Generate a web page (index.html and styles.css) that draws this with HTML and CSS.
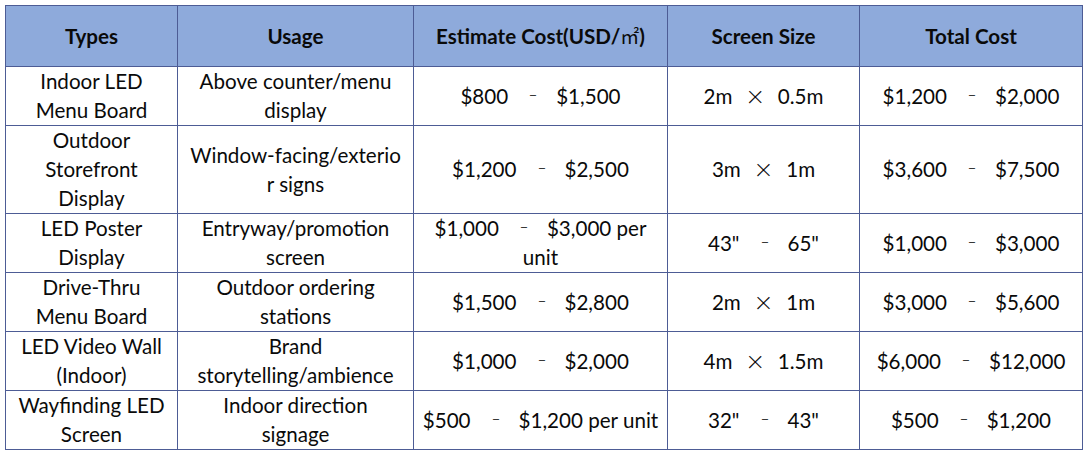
FILE: index.html
```html
<!DOCTYPE html>
<html lang="en">
<head>
<meta charset="utf-8">
<title>LED Screen Costs</title>
<link rel="stylesheet" href="styles.css">
</head>
<body>
<table class="cost-table">
  <colgroup>
    <col class="c1"><col class="c2"><col class="c3"><col class="c4"><col class="c5">
  </colgroup>
  <thead>
    <tr class="head">
      <th>Types</th>
      <th>Usage</th>
      <th>Estimate Cost(USD/<span class="cjk">㎡</span>)</th>
      <th>Screen Size</th>
      <th>Total Cost</th>
    </tr>
  </thead>
  <tbody>
    <tr>
      <td>Indoor LED<br>Menu Board</td>
      <td>Above counter/menu<br>display</td>
      <td>$800<span class="sep">–</span>$1,500</td>
      <td>2m<span class="times">×</span>0.5m</td>
      <td>$1,200<span class="sep">–</span>$2,000</td>
    </tr>
    <tr>
      <td>Outdoor<br>Storefront<br>Display</td>
      <td>Window-facing/exterio<br>r signs</td>
      <td>$1,200<span class="sep">–</span>$2,500</td>
      <td>3m<span class="times">×</span>1m</td>
      <td>$3,600<span class="sep">–</span>$7,500</td>
    </tr>
    <tr>
      <td>LED Poster<br>Display</td>
      <td>Entryway/promotion<br>screen</td>
      <td>$1,000<span class="sep">–</span>$3,000 per<br>unit</td>
      <td>43"<span class="sep">–</span>65"</td>
      <td>$1,000<span class="sep">–</span>$3,000</td>
    </tr>
    <tr>
      <td>Drive-Thru<br>Menu Board</td>
      <td>Outdoor ordering<br>stations</td>
      <td>$1,500<span class="sep">–</span>$2,800</td>
      <td>2m<span class="times">×</span>1m</td>
      <td>$3,000<span class="sep">–</span>$5,600</td>
    </tr>
    <tr>
      <td>LED Video Wall<br>(Indoor)</td>
      <td>Brand<br>storytelling/ambience</td>
      <td>$1,000<span class="sep">–</span>$2,000</td>
      <td>4m<span class="times">×</span>1.5m</td>
      <td>$6,000<span class="sep">–</span>$12,000</td>
    </tr>
    <tr>
      <td>Wayfinding LED<br>Screen</td>
      <td>Indoor direction<br>signage</td>
      <td>$500<span class="sep">–</span>$1,200 per unit</td>
      <td>32"<span class="sep">–</span>43"</td>
      <td>$500<span class="sep">–</span>$1,200</td>
    </tr>
  </tbody>
</table>
</body>
</html>
```

FILE: styles.css
```css
html, body {
  margin: 0;
  padding: 0;
  background: #ffffff;
}

body {
  padding: 5px;
  font-family: Lato, "Noto Sans", "Liberation Sans", "Noto Sans CJK SC", sans-serif;
  color: #0a0a0a;
}

.cost-table {
  border-collapse: collapse;
  table-layout: fixed;
  width: 1077px;
  font-size: 20.6px;
  line-height: 29px;
}

.c1 { width: 172px; }
.c2 { width: 236px; }
.c3 { width: 254px; }
.c4 { width: 192px; }
.c5 { width: 223px; }

.cost-table th,
.cost-table td {
  border: 1px solid #4d5c95;
  text-align: center;
  vertical-align: middle;
  padding: 0;
}

.head th {
  background: #8eaadb;
  font-weight: 700;
  height: 60px;
}

.cjk {
  font-family: "Noto Sans CJK SC", sans-serif;
  font-weight: 400;
  font-size: 19px;
}

.sep {
  display: inline-block;
  margin: 0 17px 0 19px;
  font-weight: 300;
  transform: translateY(-2px) scaleX(0.75);
}

.times {
  display: inline-block;
  margin: 0 14px;
  font-weight: 300;
  font-size: 30px;
  line-height: 0;
  transform: translateY(3px);
}
```
